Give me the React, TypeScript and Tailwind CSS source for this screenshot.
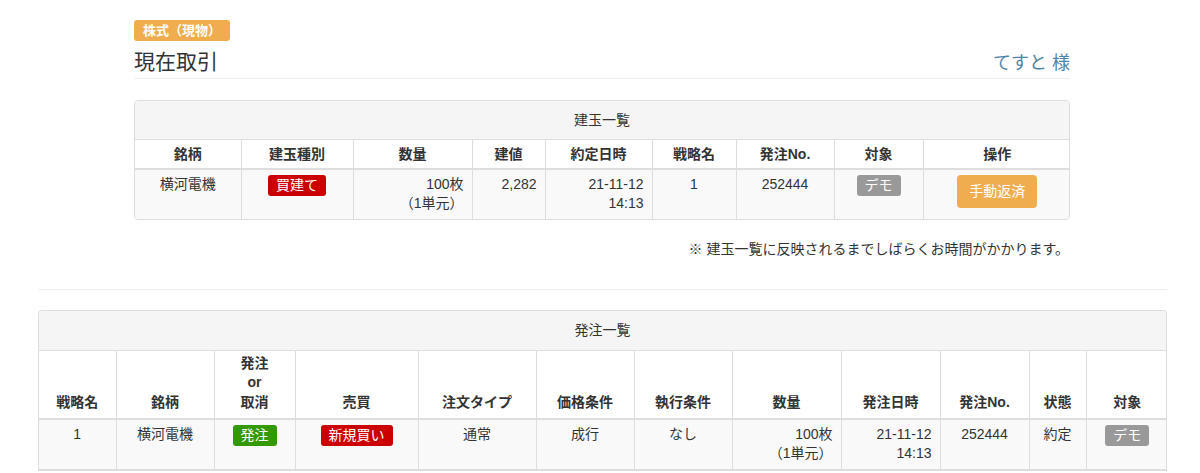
import React from 'react';

const font = { fontFamily: '"Liberation Sans", "Noto Sans CJK JP", sans-serif' };

function Badge({ color, children }: { color: string; children: React.ReactNode }) {
  return (
    <span className={`inline-block rounded-[3px] px-[8px] h-[21px] leading-[21px] text-[14px] text-white ${color}`}>
      {children}
    </span>
  );
}

const th = 'border-r border-[#ddd] last:border-r-0 font-bold text-center text-[#333] px-2 align-bottom';
const td = 'border-r border-[#ddd] last:border-r-0 text-[#333] px-2 pt-[5px] pb-[6px] align-top leading-[19px]';

function PositionTable() {
  const widths = [106, 112, 119, 73, 107, 84, 98, 89, 148];
  const heads = ['銘柄', '建玉種別', '数量', '建値', '約定日時', '戦略名', '発注No.', '対象', '操作'];
  return (
    <div className="border border-[#ddd] rounded-[4px] overflow-hidden">
      <div className="bg-[#f5f5f5] h-[39px] flex items-center justify-center text-[#333] border-b border-[#ddd]">建玉一覧</div>
      <table className="w-full table-fixed border-collapse">
        <colgroup>
          {widths.map((w, i) => (
            <col key={i} style={{ width: w }} />
          ))}
        </colgroup>
        <thead>
          <tr className="h-[29px] border-b-2 border-[#ddd]">
            {heads.map((h) => (
              <th key={h} className={`${th} align-middle`}>{h}</th>
            ))}
          </tr>
        </thead>
        <tbody>
          <tr className="bg-[#f9f9f9] h-[48px]">
            <td className={`${td} text-center`}>横河電機</td>
            <td className={`${td} text-center`}><Badge color="bg-[#cc0000]">買建て</Badge></td>
            <td className={`${td} text-right`}>100枚<br />（1単元）</td>
            <td className={`${td} text-right`}>2,282</td>
            <td className={`${td} text-right`}>21-11-12<br />14:13</td>
            <td className={`${td} text-center`}>1</td>
            <td className={`${td} text-center`}>252444</td>
            <td className={`${td} text-center`}><Badge color="bg-[#999]">デモ</Badge></td>
            <td className={`${td} text-center`}>
              <button className="bg-[#f0ad4e] text-white rounded-[4px] w-[80px] h-[33px] text-[14px]">手動返済</button>
            </td>
          </tr>
        </tbody>
      </table>
    </div>
  );
}

function OrderTable() {
  const widths = [77, 98, 81, 123, 118, 98, 98, 109, 99, 89, 57, 82];
  const heads: React.ReactNode[] = [
    '戦略名', '銘柄', <>発注<br />or<br />取消</>, '売買', '注文タイプ', '価格条件', '執行条件', '数量', '発注日時', '発注No.', '状態', '対象',
  ];
  return (
    <div className="border border-[#ddd] rounded-t-[4px] border-b-0 overflow-hidden">
      <div className="bg-[#f5f5f5] h-[40px] flex items-center justify-center text-[#333] border-b border-[#ddd]">発注一覧</div>
      <table className="w-full table-fixed border-collapse">
        <colgroup>
          {widths.map((w, i) => (
            <col key={i} style={{ width: w }} />
          ))}
        </colgroup>
        <thead>
          <tr className="h-[68px] border-b-2 border-[#ddd]">
            {heads.map((h, i) => (
              <th key={i} className={`${th} leading-[19.5px] pb-[6px]`}>{h}</th>
            ))}
          </tr>
        </thead>
        <tbody>
          <tr className="bg-[#f9f9f9] h-[48px] border-b-2 border-[#ddd]">
            <td className={`${td} text-center`}>1</td>
            <td className={`${td} text-center`}>横河電機</td>
            <td className={`${td} text-center`}><Badge color="bg-[#339900]">発注</Badge></td>
            <td className={`${td} text-center`}><Badge color="bg-[#cc0000]">新規買い</Badge></td>
            <td className={`${td} text-center`}>通常</td>
            <td className={`${td} text-center`}>成行</td>
            <td className={`${td} text-center`}>なし</td>
            <td className={`${td} text-right`}>100枚<br />（1単元）</td>
            <td className={`${td} text-right`}>21-11-12<br />14:13</td>
            <td className={`${td} text-center`}>252444</td>
            <td className={`${td} text-center`}>約定</td>
            <td className={`${td} text-center`}><Badge color="bg-[#999]">デモ</Badge></td>
          </tr>
        </tbody>
      </table>
    </div>
  );
}

export default function App() {
  return (
    <div className="min-h-screen bg-white text-[14px] text-[#333]" style={font}>
      <div className="w-[936px] ml-[134px] pt-[20px]">
        <span className="inline-block bg-[#f0ad4e] text-white font-bold text-[13px] rounded-[3px] px-[9px] h-[21px] leading-[21px]">株式（現物）</span>
        <div className="flex justify-between items-end border-b border-[#eee] pb-[1px] mt-[6px]">
          <h1 className="text-[21px] leading-[30px] text-[#333]">現在取引</h1>
          <span className="text-[18px] leading-[26px] text-[#4f84a6] pb-[1px]">てすと 様</span>
        </div>
        <div className="mt-[21px]">
          <PositionTable />
        </div>
        <p className="text-right pr-[1px] mt-[19px] leading-[20px]">※ 建玉一覧に反映されるまでしばらくお時間がかかります。</p>
      </div>
      <div className="ml-[38px] mr-[33px] mt-[30px] border-t border-[#eee]" />
      <div className="ml-[38px] mr-[33px] mt-[20px]">
        <OrderTable />
      </div>
    </div>
  );
}
